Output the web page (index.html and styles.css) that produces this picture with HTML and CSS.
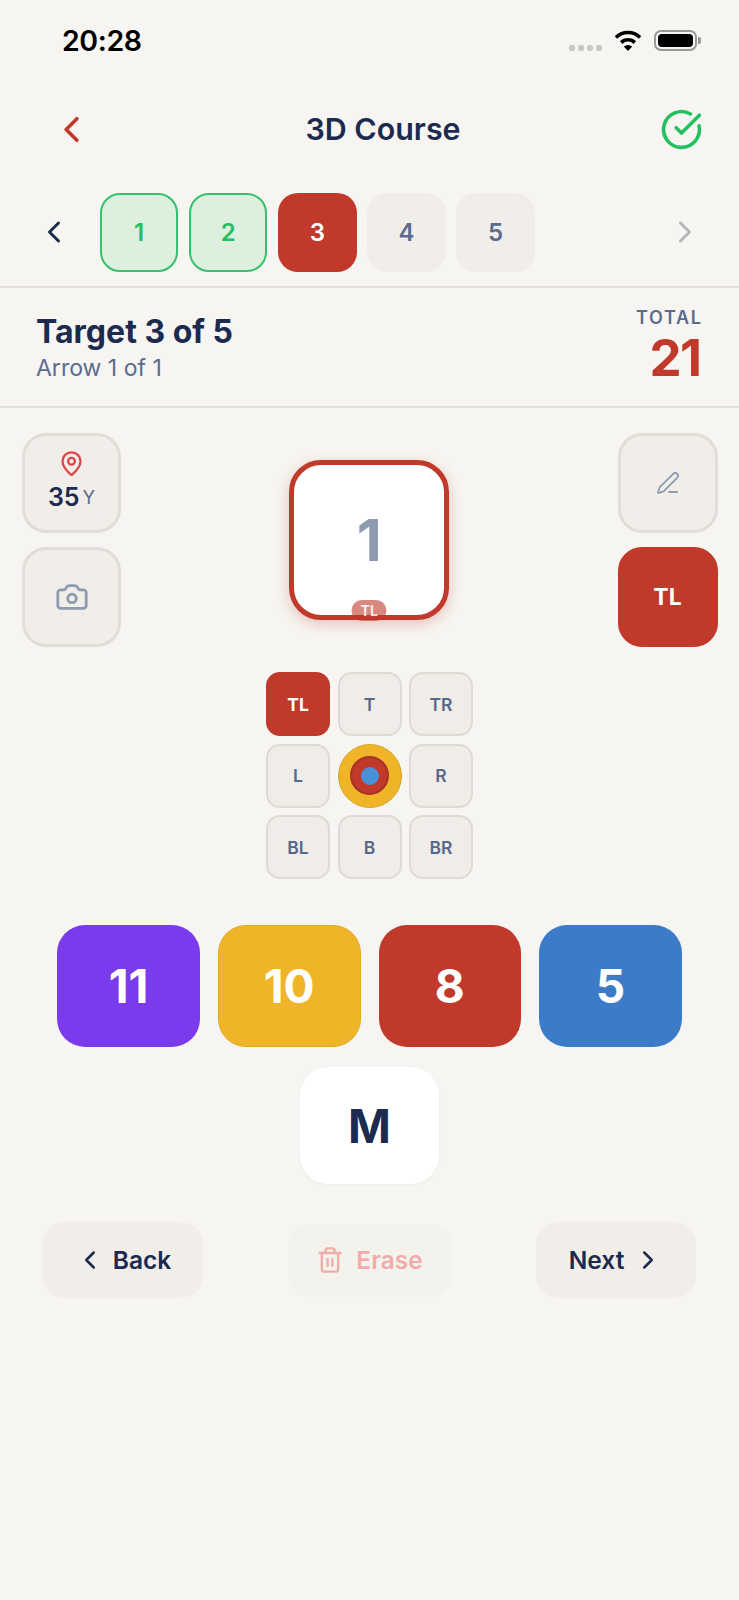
FILE: index.html
```html
<!DOCTYPE html>
<html lang="en">
<head>
<meta charset="utf-8">
<title>3D Course</title>
<link rel="stylesheet" href="styles.css">
</head>
<body>
<div class="status">
  <span class="time">20:28</span>
  <div class="status-icons">
    <div class="signal"><i></i><i></i><i></i><i></i></div>
    <svg class="wifi" viewBox="0 0 28 22" fill="none" stroke="#000" stroke-width="3.6">
      <path d="M2 8.4a17 17 0 0 1 24 0"/>
      <path d="M7.2 13.6a9.7 9.7 0 0 1 13.6 0"/>
      <path d="M14 22l-4.2-4.4a6 6 0 0 1 8.4 0z" fill="#000" stroke="none"/>
    </svg>
    <div class="battery"><div class="battery-fill"></div><div class="battery-nub"></div></div>
  </div>
</div>

<header class="topbar">
  <svg class="icon-back" viewBox="0 0 24 24" fill="none" stroke="#c0392b" stroke-width="2" stroke-linecap="round" stroke-linejoin="round"><path d="m15 18-6-6 6-6"/></svg>
  <h1 class="title">3D Course</h1>
  <svg class="icon-done" viewBox="0 0 24 24" fill="none" stroke="#22c05e" stroke-width="2" stroke-linecap="round" stroke-linejoin="round"><path d="M21.801 10A10 10 0 1 1 17 3.335"/><path d="m9 11 3 3L22 4"/></svg>
</header>

<nav class="tabs-row">
  <svg class="icon-tab" viewBox="0 0 24 24" fill="none" stroke="#1b2a4e" stroke-width="2" stroke-linecap="round" stroke-linejoin="round"><path d="m15 18-6-6 6-6"/></svg>
  <div class="tabs">
    <div class="tab tab-done">1</div>
    <div class="tab tab-done">2</div>
    <div class="tab tab-active">3</div>
    <div class="tab">4</div>
    <div class="tab">5</div>
  </div>
  <svg class="icon-tab icon-tab-next" viewBox="0 0 24 24" fill="none" stroke="#b4b7bf" stroke-width="2" stroke-linecap="round" stroke-linejoin="round"><path d="m9 18 6-6-6-6"/></svg>
</nav>

<section class="info">
  <div>
    <div class="target">Target 3 of 5</div>
    <div class="arrow">Arrow 1 of 1</div>
  </div>
  <div class="total">
    <div class="total-label">TOTAL</div>
    <div class="total-value">21</div>
  </div>
</section>

<section class="play">
  <div class="side">
    <div class="side-btn distance">
      <svg class="icon-pin" viewBox="0 0 24 24" fill="none" stroke="#e04545" stroke-width="2" stroke-linecap="round" stroke-linejoin="round"><path d="M20 10c0 4.993-5.539 10.193-7.399 11.799a1 1 0 0 1-1.202 0C9.539 20.193 4 14.993 4 10a8 8 0 0 1 16 0"/><circle cx="12" cy="10" r="3"/></svg>
      <div class="distance-text"><span class="distance-num">35</span><span class="distance-unit">Y</span></div>
    </div>
    <div class="side-btn">
      <svg class="icon-camera" viewBox="0 0 24 24" fill="none" stroke="#8e9bb0" stroke-width="2" stroke-linecap="round" stroke-linejoin="round"><path d="M13.997 4a2 2 0 0 1 1.76 1.05l.486.9A2 2 0 0 0 18.003 7H20a2 2 0 0 1 2 2v9a2 2 0 0 1-2 2H4a2 2 0 0 1-2-2V9a2 2 0 0 1 2-2h1.997a2 2 0 0 0 1.759-1.048l.489-.904A2 2 0 0 1 10.004 4z"/><circle cx="12" cy="13" r="3"/></svg>
    </div>
  </div>
  <div class="arrow-card">
    <span class="arrow-num">1</span>
    <span class="arrow-badge">TL</span>
  </div>
  <div class="side">
    <div class="side-btn">
      <svg class="icon-pen" viewBox="0 0 24 24" fill="none" stroke="#8e9bb0" stroke-width="1.8" stroke-linecap="round" stroke-linejoin="round"><path d="M13 21h8"/><path d="M21.174 6.812a1 1 0 0 0-3.986-3.987L3.842 16.174a2 2 0 0 0-.5.83l-1.321 4.352a.5.5 0 0 0 .623.622l4.353-1.32a2 2 0 0 0 .83-.497z"/></svg>
    </div>
    <div class="side-btn side-btn-active">TL</div>
  </div>
</section>

<section class="aim">
  <div class="cell cell-active">TL</div>
  <div class="cell">T</div>
  <div class="cell">TR</div>
  <div class="cell">L</div>
  <div class="bull"><div class="bull-red"><div class="bull-blue"></div></div></div>
  <div class="cell">R</div>
  <div class="cell">BL</div>
  <div class="cell">B</div>
  <div class="cell">BR</div>
</section>

<section class="scores">
  <div class="score score-purple">11</div>
  <div class="score score-yellow">10</div>
  <div class="score score-red">8</div>
  <div class="score score-blue">5</div>
  <div class="score score-miss">M</div>
</section>

<footer class="actions">
  <div class="action action-back">
    <svg class="icon-nav" viewBox="0 0 24 24" fill="none" stroke="#1b2a4e" stroke-width="2" stroke-linecap="round" stroke-linejoin="round"><path d="m15 18-6-6 6-6"/></svg>
    <span>Back</span>
  </div>
  <div class="action action-disabled">
    <svg class="icon-trash" viewBox="0 0 24 24" fill="none" stroke="#e8403c" stroke-width="2" stroke-linecap="round" stroke-linejoin="round"><path d="M10 11v6"/><path d="M14 11v6"/><path d="M19 6v14a2 2 0 0 1-2 2H7a2 2 0 0 1-2-2V6"/><path d="M3 6h18"/><path d="M8 6V4a2 2 0 0 1 2-2h4a2 2 0 0 1 2 2v2"/></svg>
    <span>Erase</span>
  </div>
  <div class="action action-next">
    <span>Next</span>
    <svg class="icon-nav" viewBox="0 0 24 24" fill="none" stroke="#1b2a4e" stroke-width="2" stroke-linecap="round" stroke-linejoin="round"><path d="m9 18 6-6-6-6"/></svg>
  </div>
</footer>
</body>
</html>
```

FILE: styles.css
```css
* { box-sizing: border-box; }
html, body { margin: 0; padding: 0; }
body {
  width: 739px;
  height: 1600px;
  overflow: hidden;
  background: #f7f5f1;
  color: #1b2a4e;
  font-family: Inter, "Liberation Sans", sans-serif;
}

/* status bar */
.status {
  height: 79px;
  padding: 2px 42px 0 62px;
  display: flex;
  align-items: center;
  justify-content: space-between;
}
.time { font-size: 28.5px; font-weight: 600; color: #000; letter-spacing: -0.4px; }
.status-icons { display: flex; align-items: center; gap: 12px; }
.signal { display: flex; gap: 3px; margin-top: 15px; }
.signal i { width: 6px; height: 6px; border-radius: 2px; background: #c9c8c5; }
.wifi { width: 28px; height: 22px; margin-top: -2px; }
.battery { position: relative; width: 43px; height: 21px; border: 2px solid #999; border-radius: 7px; padding: 2px; }
.battery-fill { height: 100%; background: #000; border-radius: 4px; }
.battery-nub { position: absolute; right: -6px; top: 5px; width: 3px; height: 7px; background: #999; border-radius: 0 2px 2px 0; }

/* top bar */
.topbar {
  height: 100px;
  padding: 0 36px 0 50px;
  display: flex;
  align-items: center;
  justify-content: space-between;
}
.title { margin: 0 0 0 13px; font-size: 30.4px; font-weight: 600; }
.icon-back { width: 43px; height: 43px; }
.icon-done { width: 43px; height: 43px; }

/* target tabs */
.tabs-row {
  height: 109px;
  padding: 14px 36px 15px 36px;
  display: flex;
  align-items: center;
  border-bottom: 2px solid #e4dfd9;
}
.icon-tab { width: 36px; height: 36px; flex: none; }
.icon-tab-next { margin-left: auto; }
.tabs { display: flex; gap: 10.7px; margin-left: 28px; }
.tab {
  width: 78.4px;
  height: 79px;
  border-radius: 20px;
  background: #f1eee9;
  color: #5a6b8f;
  font-size: 24px;
  font-weight: 600;
  display: flex;
  align-items: center;
  justify-content: center;
}
.tab-done { background: #dcf0dd; border: 2px solid #35c06c; color: #22c05e; }
.tab-active { background: #c0392b; color: #fff; }

/* info */
.info {
  height: 120px;
  padding: 3px 37px 0 36px;
  display: flex;
  align-items: center;
  justify-content: space-between;
  border-bottom: 2px solid #e4dfd9;
}
.target { font-size: 32px; font-weight: 700; line-height: 39px; }
.arrow { font-size: 23px; color: #5a6b8f; line-height: 33px; margin-top: 1px; }
.total { text-align: right; margin-top: -4px; }
.total-label { font-size: 18px; font-weight: 600; letter-spacing: 1.7px; color: #5a6b8f; line-height: 22px; margin-right: -0.7px; margin-top: -1px; }
.total-value { font-size: 51px; font-weight: 700; letter-spacing: -1.5px; color: #c0392b; line-height: 54px; margin-top: 2px; margin-right: 1.5px; }

/* play area */
.play {
  margin-top: 25px;
  padding: 0 21.5px 0 22px;
  display: flex;
  align-items: center;
  justify-content: space-between;
}
.side { display: flex; flex-direction: column; gap: 14px; }
.side-btn {
  width: 100px;
  height: 100px;
  border-radius: 24px;
  background: #f1eee9;
  border: 3px solid #e2ddd6;
  display: flex;
  flex-direction: column;
  align-items: center;
  justify-content: center;
}
.side:first-child .side-btn { width: 99px; }
.side-btn-active { background: #c0392b; border-color: #c0392b; color: #fff; font-size: 23px; font-weight: 700; }
.distance { padding-bottom: 5px; }
.icon-pin { width: 27px; height: 27px; }
.distance-text { display: flex; align-items: baseline; gap: 3px; margin-top: 5px; }
.distance-num { font-size: 25px; font-weight: 600; line-height: 30px; }
.distance-unit { font-size: 18.5px; color: #5a6b8f; position: relative; top: -2px; }
.icon-camera { width: 34px; height: 34px; }
.icon-pen { width: 24px; height: 24px; }
.arrow-card {
  position: relative;
  width: 160px;
  height: 160px;
  margin-right: 0;
  border-radius: 32px;
  background: #fff;
  border: 5px solid #c0392b;
  box-shadow: 0 4px 14px rgba(192, 57, 43, 0.28);
  display: flex;
  align-items: center;
  justify-content: center;
}
.arrow-num { font-size: 58px; font-weight: 700; color: #8e9bb0; }
.arrow-badge {
  position: absolute;
  left: 50%;
  bottom: -6px;
  transform: translateX(-50%);
  width: 35px;
  height: 21px;
  border-radius: 11px;
  background: rgba(192, 57, 43, 0.6);
  color: rgba(255, 255, 255, 0.85);
  font-size: 14px;
  font-weight: 700;
  line-height: 21px;
  text-align: center;
}

/* aim grid */
.aim {
  margin: 25px auto 0;
  width: 207px;
  display: grid;
  grid-template-columns: repeat(3, 64px);
  grid-auto-rows: 64px;
  gap: 7.5px;
}
.cell {
  border-radius: 14px;
  background: #f0ede8;
  border: 2px solid #dfdad3;
  color: #56688c;
  font-size: 17.5px;
  font-weight: 600;
  display: flex;
  align-items: center;
  justify-content: center;
}
.cell-active { background: #c0392b; border-color: #c0392b; color: #fff; font-weight: 700; }
.bull {
  border-radius: 50%;
  background: #f0b429;
  border: 1.5px solid #dba525;
  display: flex;
  align-items: center;
  justify-content: center;
}
.bull-red {
  width: 39px;
  height: 39px;
  border-radius: 50%;
  background: #c0392b;
  border: 2px solid #a93226;
  display: flex;
  align-items: center;
  justify-content: center;
}
.bull-blue { width: 18px; height: 18px; border-radius: 50%; background: #4a90d9; }

/* scores */
.scores {
  margin: 46px auto 0;
  width: 625px;
  display: flex;
  flex-wrap: wrap;
  justify-content: center;
  align-items: center;
  gap: 20px 18px;
}
.score {
  width: 142.6px;
  height: 122px;
  border-radius: 28px;
  color: #fff;
  font-size: 46px;
  font-weight: 700;
  display: flex;
  align-items: center;
  justify-content: center;
}
.score-purple { background: #7c3aed; }
.score-yellow { background: #f0b429; border: 1px solid #e3a922; }
.score-red { background: #c0392b; }
.score-blue { background: #3b7bc8; }
.score-miss {
  width: 139px;
  height: 117px;
  background: #fff;
  color: #1b2a4e;
  box-shadow: 0 1px 3px rgba(0, 0, 0, 0.04);
}

/* actions */
.actions {
  margin-top: 38px;
  padding: 0 43px;
  display: flex;
  align-items: center;
  justify-content: space-between;
}
.action {
  width: 160px;
  height: 76px;
  border-radius: 22px;
  background: #f1eee9;
  font-size: 24.5px;
  font-weight: 600;
  display: flex;
  align-items: center;
  justify-content: center;
  gap: 7px;
}
.action-back { gap: 8px; }
.action-next { gap: 9px; }
.action-disabled {
  width: 164px;
  height: 73px;
  gap: 12px;
  opacity: 0.4;
  color: #e8403c;
}
.icon-nav { width: 30px; height: 30px; }
.icon-trash { width: 28px; height: 28px; }
```
